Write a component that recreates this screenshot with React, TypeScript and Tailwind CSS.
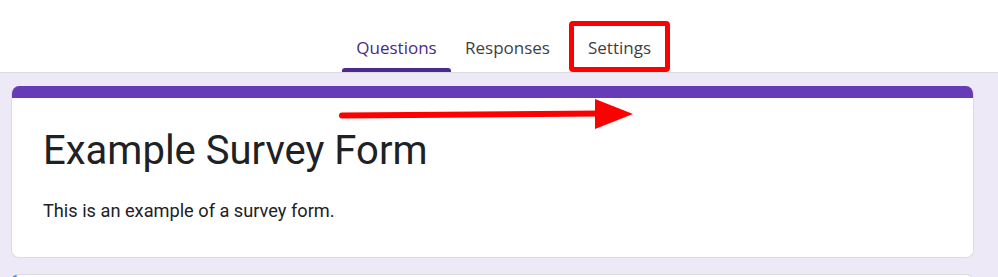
const TABS = [
  { label: "Questions", active: true },
  { label: "Responses", active: false },
  { label: "Settings", active: false, marked: true },
];

export default function App() {
  return (
    <div className="relative w-[998px] h-[277px] overflow-hidden bg-[#ede9f7] font-['Roboto',sans-serif]">
      <header className="h-[73px] bg-white border-b border-[#dadce0] flex items-end pl-[342px]">
        {TABS.map((t) => (
          <div
            key={t.label}
            className={
              "relative h-[72px] flex items-center justify-center font-['Open_Sans',sans-serif] text-[17px] font-medium " +
              (t.active ? "w-[109px] text-[#4a2a85]" : t.marked ? "w-[99px] ml-[6px] text-[#3c3f44]" : "w-[113px] text-[#3c3f44]")
            }
          >
            <span className="pt-[24px]">{t.label}</span>
            {t.active && (
              <span className="absolute bottom-0 left-0 right-0 h-[4px] rounded-t-[3px] bg-[#4a2a8c]" />
            )}
            {t.marked && (
              <span className="absolute left-[-1px] top-[21px] w-[101px] h-[51px] border-[5px] border-[#ff0000] rounded-[4px]" />
            )}
          </div>
        ))}
      </header>

      <section className="ml-[11px] mt-[13px] w-[963px] h-[172px] bg-white rounded-[8px] border border-[#dadce0] border-t-0 overflow-hidden">
        <div className="h-[12px] bg-[#673ab7]" />
        <div className="pl-[31px] pt-[29px]">
          <h1 className="text-[40px] leading-[48px] text-[#202124]">Example Survey Form</h1>
          <p className="mt-[24px] text-[18.2px] leading-[24px] text-[#202124]">
            This is an example of a survey form.
          </p>
        </div>
      </section>

      <div className="ml-[11px] mt-[16px] w-[963px] h-[20px] bg-white rounded-t-[8px] border border-[#dadce0] border-l-[4px] border-l-[#4285f4]" />

      <svg className="absolute left-0 top-0" width="998" height="277" viewBox="0 0 998 277">
        <line x1="342" y1="115.5" x2="600" y2="113.5" stroke="#ff0000" strokeWidth="6" strokeLinecap="round" />
        <polygon points="595,99 633,114 595,129" fill="#ff0000" />
      </svg>
    </div>
  );
}
